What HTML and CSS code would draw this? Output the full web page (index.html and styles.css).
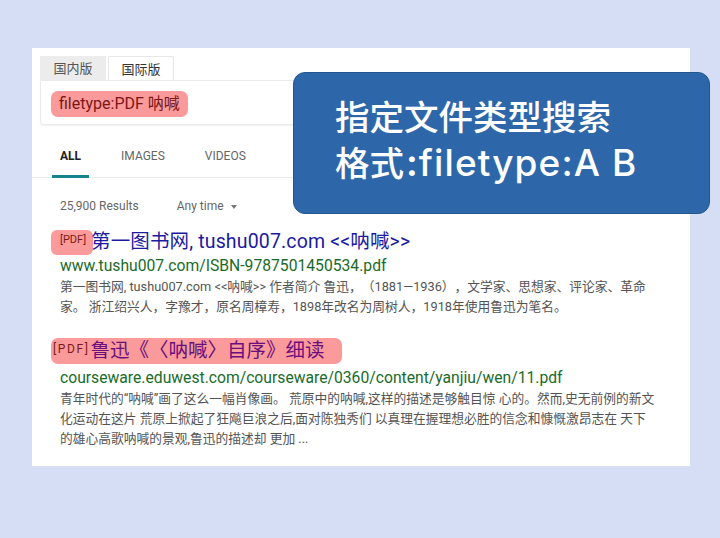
FILE: index.html
```html
<!DOCTYPE html>
<html lang="zh">
<head>
<meta charset="utf-8">
<link rel="stylesheet" href="styles.css">
</head>
<body>
<div class="stage">
  <div class="card">
    <div class="tabs">
      <div class="tab">国内版</div>
      <div class="tab active">国际版</div>
    </div>
    <div class="searchbox">
      <span class="query">filetype:PDF 呐喊</span>
    </div>
    <div class="nav">
      <div class="nav-item active">ALL</div>
      <div class="nav-item">IMAGES</div>
      <div class="nav-item">VIDEOS</div>
    </div>
    <div class="meta">
      <span class="count">25,900 Results</span>
      <span class="time">Any time <span class="caret"></span></span>
    </div>
    <div class="result">
      <div class="title-row"><span class="pdf-tag">[PDF]</span><span class="title">第一图书网, tushu007.com &lt;&lt;呐喊&gt;&gt;</span></div>
      <div class="url">www.tushu007.com/ISBN-9787501450534.pdf</div>
      <div class="snippet">第一图书网, tushu007.com &lt;&lt;呐喊&gt;&gt; 作者简介 鲁迅，（1881—1936），文学家、思想家、评论家、革命<br>家。 浙江绍兴人，字豫才，原名周樟寿，1898年改名为周树人，1918年使用鲁迅为笔名。</div>
    </div>
    <div class="result second">
      <div class="title-row hl"><span class="pdf-small">[PDF]</span><span class="title visited">鲁迅《〈呐喊〉自序》细读</span></div>
      <div class="url">courseware.eduwest.com/courseware/0360/content/yanjiu/wen/11.pdf</div>
      <div class="snippet">青年时代的“呐喊”画了这么一幅肖像画。 荒原中的呐喊,这样的描述是够触目惊 心的。然而,史无前例的新文<br>化运动在这片 荒原上掀起了狂飚巨浪之后,面对陈独秀们 以真理在握理想必胜的信念和慷慨激昂志在 天下<br>的雄心高歌呐喊的景观,鲁迅的描述却 更加 ...</div>
    </div>
  </div>
  <div class="callout">
    <div class="callout-line">指定文件类型搜索</div>
    <div class="callout-line">格式<span class="colon">:</span><span class="latin">filetype:A B</span></div>
  </div>
</div>
</body>
</html>
```

FILE: styles.css
```css
html, body {
  margin: 0;
  padding: 0;
}
body {
  background: #d6def6;
  font-family: Roboto, "Noto Sans CJK SC", sans-serif;
  text-spacing-trim: space-all;
}
.stage {
  position: relative;
  width: 720px;
  height: 538px;
  padding-top: 48px;
  box-sizing: border-box;
}
.card {
  margin-left: 32px;
  width: 658px;
  height: 418px;
  background: #ffffff;
  box-sizing: border-box;
  padding-top: 8px;
  overflow: hidden;
}
.tabs {
  display: flex;
  padding-left: 8px;
  height: 24px;
}
.tab {
  width: 66px;
  font-size: 13px;
  line-height: 24px;
  color: #555;
  text-align: center;
  background: #ececec;
  font-family: "Noto Sans CJK SC", sans-serif;
}
.tab.active {
  background: #fff;
  color: #333;
  margin-left: 2px;
  border: 1px solid #e6e6e6;
  border-bottom: none;
  border-radius: 2px 2px 0 0;
  box-sizing: border-box;
}
.searchbox {
  margin-left: 8px;
  width: 620px;
  height: 45px;
  box-sizing: border-box;
  border: 1px solid #ebebeb;
  border-radius: 0 0 4px 4px;
  box-shadow: 0 1px 2px rgba(0,0,0,0.06);
  padding: 10px 0 0 10px;
}
.query {
  display: inline-block;
  background: #fa9a9a;
  color: #7d1616;
  font-size: 16px;
  line-height: 26px;
  height: 26px;
  padding: 0 8px;
  border-radius: 7px;
}
.nav {
  display: flex;
  height: 53px;
  border-bottom: 1px solid #ececec;
  padding-left: 28px;
  box-sizing: border-box;
}
.nav-item {
  font-size: 12px;
  color: #666;
  padding-top: 24px;
  margin-right: 40px;
  position: relative;
}
.nav-item.active {
  color: #222;
  font-weight: 700;
}
.nav-item.active::after {
  content: "";
  position: absolute;
  left: -8px;
  right: -8px;
  bottom: -1px;
  height: 3px;
  background: #17838f;
}
.meta {
  display: flex;
  padding: 21px 0 0 28px;
  height: 51px;
  box-sizing: border-box;
  font-size: 12px;
  color: #666;
}
.time {
  margin-left: 38px;
}
.caret {
  display: inline-block;
  width: 0;
  height: 0;
  border-left: 3.5px solid transparent;
  border-right: 3.5px solid transparent;
  border-top: 4px solid #777;
  vertical-align: middle;
  margin-left: 4px;
}
.result {
  padding-left: 19px;
}
.title-row {
  display: flex;
  align-items: center;
  height: 26px;
}
.pdf-tag {
  background: #fa9a9a;
  color: #7a1a1a;
  font-size: 11px;
  width: 42px;
  height: 25px;
  line-height: 20px;
  padding-left: 9px;
  box-sizing: border-box;
  border-radius: 6px;
  margin-right: -2px;
}
.title {
  font-size: 19.5px;
  color: #1c1a9f;
  line-height: 26px;
  letter-spacing: 0.15px;
}
.title.visited {
  color: #6b0f7e;
  letter-spacing: 0;
}
.title-row.hl {
  display: inline-flex;
  background: #fa9a9a;
  border-radius: 7px;
  padding: 0 18px 0 2px;
}
.pdf-small {
  font-size: 12px;
  letter-spacing: 1.6px;
  color: #7a1a1a;
  margin-right: 1px;
  align-self: flex-start;
  line-height: 22px;
}
.url {
  font-size: 15.7px;
  color: #1a6b2a;
  margin-left: 9px;
  line-height: 22px;
}
.snippet {
  font-size: 12.75px;
  color: #545454;
  margin-left: 9px;
  line-height: 20px;
}
.result.second {
  margin-top: 21px;
}
.result.second .url {
  margin-top: 3px;
}
.callout {
  position: absolute;
  left: 293px;
  top: 72px;
  width: 417px;
  height: 142px;
  box-sizing: border-box;
  background: #2e67a9;
  border: 1px solid #23568f;
  border-radius: 12px;
  padding: 19px 0 0 41px;
  color: #fff;
  font-family: "Noto Sans CJK SC", sans-serif;
  font-weight: 500;
  font-size: 34.5px;
  line-height: 46px;
}
.colon {
  font-family: Inter, sans-serif;
  font-weight: 600;
  font-size: 37px;
  margin-left: 2px;
  margin-right: 1px;
}
.latin {
  font-family: Inter, "Noto Sans CJK SC", sans-serif;
  font-weight: 500;
  font-size: 37px;
  letter-spacing: 1.1px;
}
```
